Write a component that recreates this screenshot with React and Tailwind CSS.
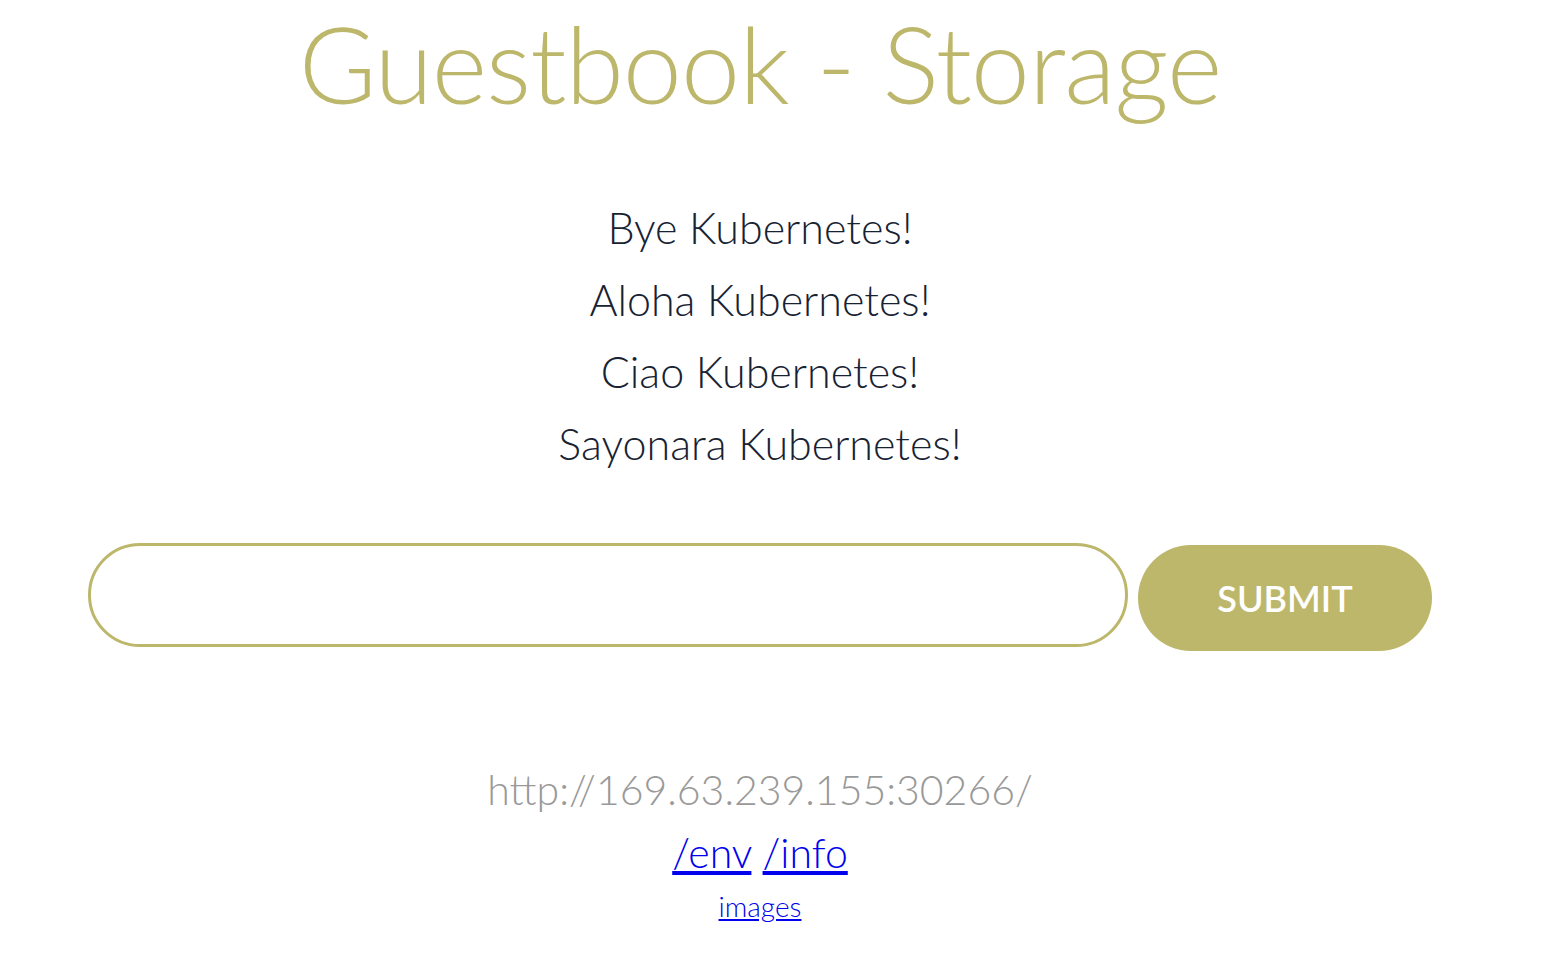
import React, { useState } from "react";

function App() {
  const [value, setValue] = useState("");
  const messages = [
    "Bye Kubernetes!",
    "Aloha Kubernetes!",
    "Ciao Kubernetes!",
    "Sayonara Kubernetes!",
  ];

  return (
    <div className="w-[1520px] bg-white font-['Lato',sans-serif] text-center">
      <h1 className="text-[106px] leading-[126px] font-light text-[#bdb76b] tracking-[-1px]">
        Guestbook - Storage
      </h1>
      <div className="mt-[66px] flex flex-col">
        {messages.map((m) => (
          <p key={m} className="text-[43px] leading-[72px] font-light text-[#172233]">
            {m}
          </p>
        ))}
      </div>
      <form
        className="mt-[63px] flex items-start justify-center gap-[10px]"
        onSubmit={(e) => e.preventDefault()}
      >
        <input
          value={value}
          onChange={(e) => setValue(e.target.value)}
          className="w-[1040px] h-[104px] rounded-full border-[3px] border-[#bdb76b] bg-white px-8 text-[40px] outline-none"
        />
        <button className="w-[294px] h-[106px] mt-[2px] rounded-full bg-[#bdb76b] text-white text-[36px] font-semibold">
          SUBMIT
        </button>
      </form>
      <div className="mt-[111px] text-[41px] leading-[56px] font-light text-[#999999]">
        http://169.63.239.155:30266/
      </div>
      <div className="mt-[7px] text-[41px] leading-[56px] font-light">
        <a href="#" className="text-[#0000ee] underline">/env</a>{" "}
        <a href="#" className="text-[#0000ee] underline">/info</a>
      </div>
      <div className="mt-[5px] text-[28px] leading-[40px] font-light">
        <a href="#" className="text-[#0000ee] underline">images</a>
      </div>
    </div>
  );
}

export default App;
